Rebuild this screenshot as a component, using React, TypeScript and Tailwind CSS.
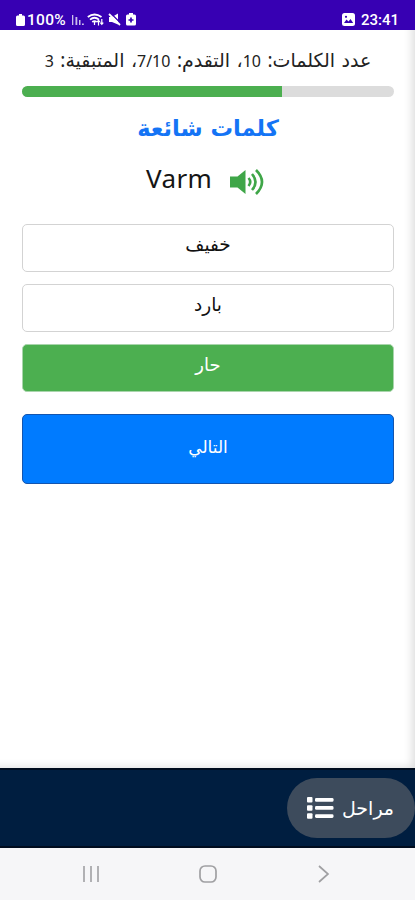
const answers = [
  { text: "خفيف", correct: false },
  { text: "بارد", correct: false },
  { text: "حار", correct: true },
];

function StatusBar() {
  return (
    <header className="h-[30px] bg-[#3700b3] text-white flex items-center justify-between pl-4 pr-[16px] pt-[9px] font-['Roboto',sans-serif] text-[15px] leading-[20px]">
      <div className="flex items-center">
        <svg width="9" height="12" viewBox="0 0 9 12" fill="currentColor">
          <path d="M3 0h3v1.500h1.500Q9 1.500 9 3v7.500Q9 12 7.500 12h-6Q0 12 0 10.500V3q0-1.500 1.500-1.500H3z" />
        </svg>
        <span className="ml-[2px] w-[40px] text-[15.500px] font-medium tracking-[0.3px]">100%</span>
        <svg className="ml-[5px]" width="12" height="11" viewBox="0 0 12 11" fill="currentColor">
          <path d="M0 1h1.300v10H0zM3.500 3h1.800v8H3.500zM7 6h1.500v5H7zM10 9.500h1.800V11H10z" opacity=".75" />
        </svg>
        <svg className="ml-[3px]" width="17" height="14" viewBox="0 0 17 14" fill="none" stroke="currentColor" strokeWidth="1.800">
          <path d="M.8 4Q7.500-1 14.500 4M3 6.600Q7.500 3 12 6.600M5.300 9Q7.500 7.200 9.700 9" />
          <path d="M7.500 9v3M11.500 12.500V7.500M10 9l1.500-1.700L13 9M14.800 6v5M13.300 9.700l1.500 1.600 1.500-1.600" strokeWidth="1.200" />
        </svg>
        <svg className="ml-[4px]" width="13" height="13" viewBox="0 0 13 13" fill="currentColor">
          <path d="M1 4h3l6-3.500v11L4 9H1z" />
          <path d="m2.500 0 11 11" stroke="#3700b3" strokeWidth="1.300" />
          <path d="m1 1 11 11" stroke="currentColor" strokeWidth="1.800" />
        </svg>
        <svg className="ml-[5px]" width="10" height="13" viewBox="0 0 10 13" fill="currentColor">
          <path d="M3 0h4v1.500h1.500Q10 1.500 10 3v8q0 1.500-1.500 1.500h-7Q0 12.500 0 11V3q0-1.500 1.500-1.500H3z" />
          <path d="M5 4.500v5M2.500 7h5" stroke="#3700b3" strokeWidth="1.700" />
        </svg>
      </div>
      <div className="flex items-center gap-[6px]">
        <svg width="13" height="13" viewBox="0 0 13 13" fill="currentColor">
          <rect width="13" height="13" rx="2.500" />
          <path d="m2 10 2.500-3.500 2 2L8.500 6l2.700 4z" fill="#3700b3" />
          <circle cx="4" cy="3.800" r="1.100" fill="#3700b3" />
        </svg>
        <span className="font-medium">23:41</span>
      </div>
    </header>
  );
}

function Speaker() {
  return (
    <svg width="35" height="28" viewBox="0 0 35 28" fill="none" stroke="#3fa648" strokeWidth="2.600">
      <path d="M0 8.500h7.500L15.500 2v24l-8-6.500H0z" fill="#3fa648" stroke="none" />
      <path d="M18.500 10Q22 14 18.500 18M22 6q7 8 0 16M26 2q12 12 0 24" />
    </svg>
  );
}

function ListIcon() {
  return (
    <svg width="27" height="22" viewBox="0 0 27 22" fill="currentColor">
      <rect width="5.500" height="5.500" rx="1" />
      <rect y="8.200" width="5.500" height="5.500" rx="1" />
      <rect y="16.300" width="5.500" height="5.500" rx="1" />
      <rect x="8" y="1" width="18.500" height="3.700" rx="1.300" />
      <rect x="8" y="9.100" width="18.500" height="3.700" rx="1.300" />
      <rect x="8" y="17.200" width="18.500" height="3.700" rx="1.300" />
    </svg>
  );
}

export default function App() {
  return (
    <div className="h-[900px] w-full flex flex-col overflow-hidden bg-white font-['DejaVu_Sans',sans-serif]">
      <StatusBar />
      <main
        dir="rtl"
        className="h-[738px] pl-[22px] pr-[21px] flex flex-col bg-white shadow-[inset_-8px_-6px_8px_-5px_#dedede]"
      >
        <p className="mt-[18px] h-[24px] text-center font-['Noto_Sans','DejaVu_Sans',sans-serif] text-[19px] leading-[24px] [word-spacing:1.500px] text-[#222] whitespace-nowrap">
          عدد الكلمات: <span className="text-[16px]">10</span>، التقدم: <span className="text-[16px]">7/10</span>، المتبقية: <span className="text-[16px]">3</span>
        </p>
        <div dir="ltr" className="mt-[14px] h-[11px] rounded-full bg-[#dcdcdc] overflow-hidden">
          <div className="h-full w-[70%] bg-[#4caf50]" />
        </div>
        <h1 className="mt-[15px] h-[32px] text-center text-[22.500px] leading-[32px] font-bold text-[#1474f5]">
          كلمات شائعة
        </h1>
        <div dir="ltr" className="mt-[20px] h-[36px] ml-[124px] flex items-center">
          <span className="w-[84px] -mt-[8px] font-['Noto_Sans',sans-serif] text-[26px] leading-[32px] tracking-[0.4px] text-[#151515]">Varm</span>
          <Speaker />
        </div>
        <ul className="mt-[24px] flex flex-col gap-[12px]">
          {answers.map((a) => (
            <li
              key={a.text}
              className={
                a.correct
                  ? "h-[48px] rounded-[5px] border border-[#a9d5ac] bg-[#4caf50] text-white text-center text-[18px] leading-[40px]"
                  : "h-[48px] rounded-[5px] border-[1.500px] border-[#d3d3d3] bg-white text-[#111] text-center text-[18.500px] leading-[40px]"
              }
            >
              {a.text}
            </li>
          ))}
        </ul>
        <button className="mt-[22px] h-[70px] pb-[3px] rounded-[5px] border border-[#1455ae] bg-[#007bff] text-white text-[17px]">
          التالي
        </button>
      </main>
      <footer dir="rtl" className="h-[80px] flex items-center bg-[#001e40] border-y-2 border-[#000c1e]">
        <button className="w-[128px] h-[60px] pr-[1px] rounded-full bg-[#3d4b5c] text-white text-[19px] flex items-center justify-center gap-[8px]">
          <span>مراحل</span>
          <ListIcon />
        </button>
      </footer>
      <nav className="h-[52px] pl-[82px] pr-[84px] flex items-center justify-between bg-[#f6f6f8] text-[#a0a0a3]">
        <svg width="18" height="18" viewBox="0 0 18 18" stroke="currentColor" strokeWidth="1.600">
          <path d="M2 1v16M9 1v16M16 1v16" />
        </svg>
        <svg className="-ml-[2px]" width="20" height="20" viewBox="0 0 20 20" fill="none" stroke="currentColor" strokeWidth="1.700">
          <rect x="2" y="2" width="16" height="16" rx="5" />
        </svg>
        <svg width="14" height="18" viewBox="0 0 14 18" fill="none" stroke="currentColor" strokeWidth="1.700">
          <path d="m2 1 9 8-9 8" />
        </svg>
      </nav>
    </div>
  );
}
